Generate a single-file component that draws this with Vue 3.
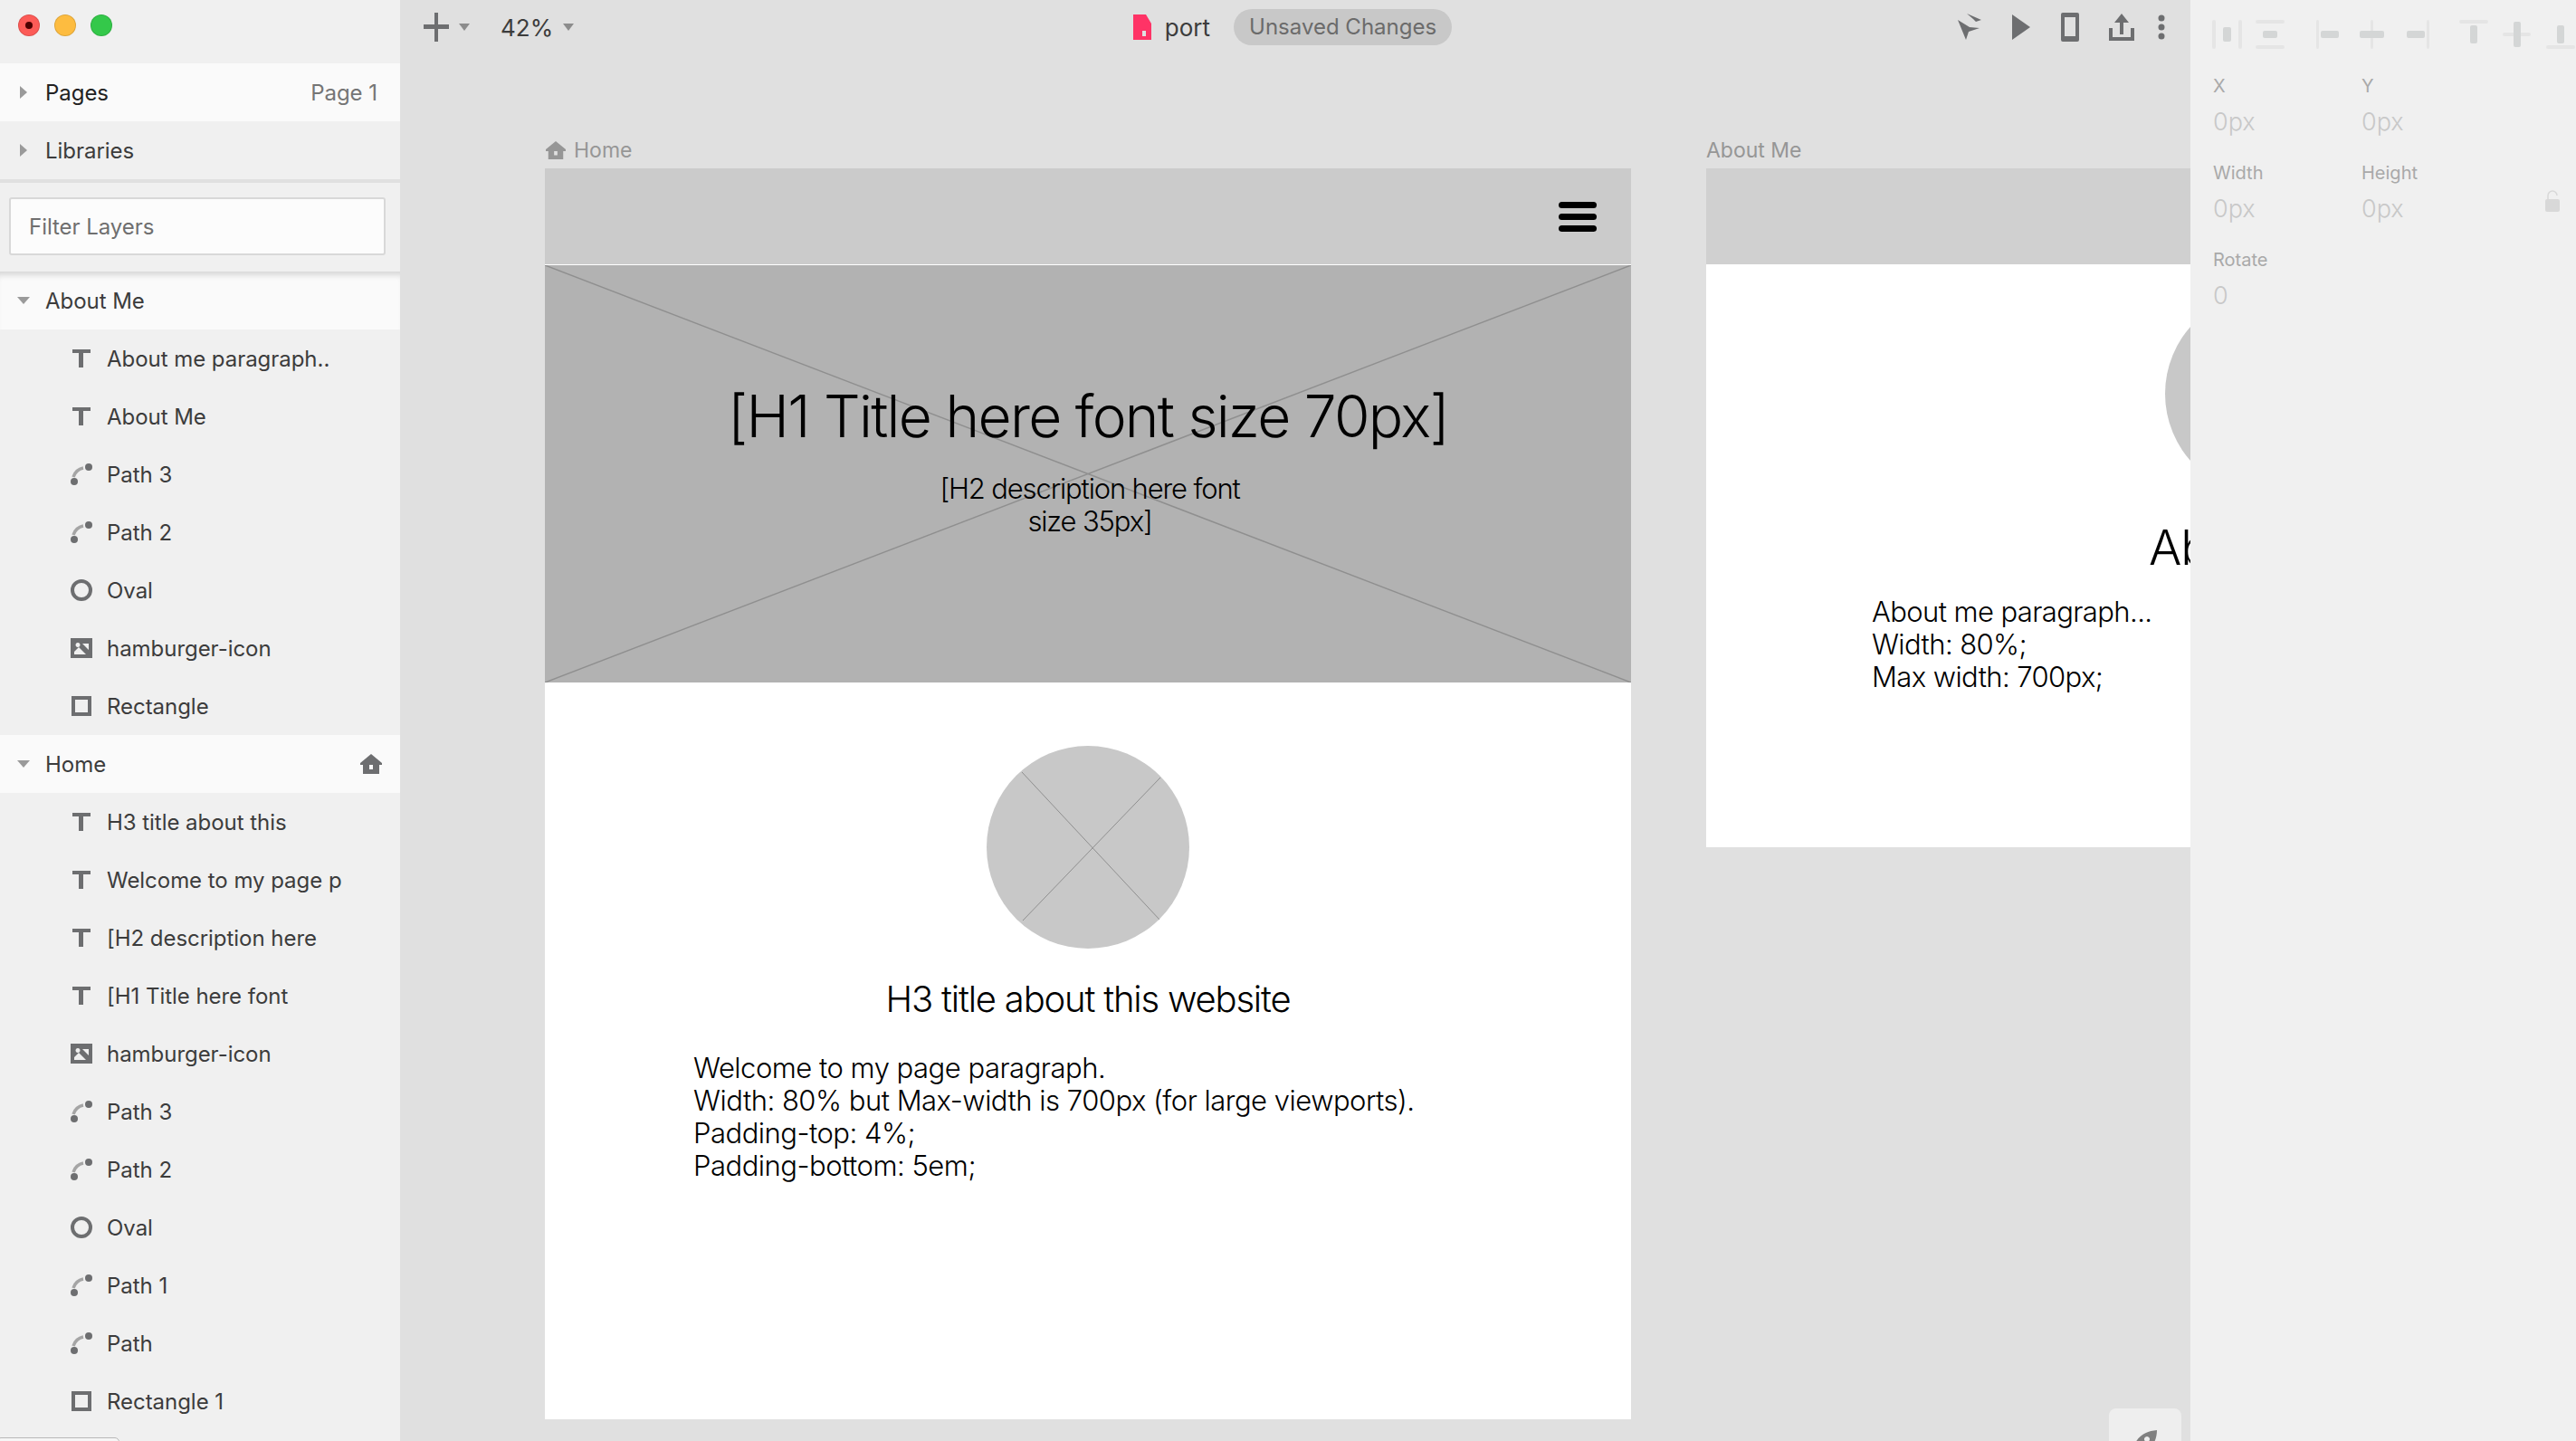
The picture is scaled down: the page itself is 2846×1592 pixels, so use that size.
<template>
  <div class="app">
    <aside class="sidebar">
      <div class="traffic">
        <span class="light red"><i></i></span>
        <span class="light yellow"></span>
        <span class="light green"></span>
      </div>
      <div class="head active">
        <span class="caret-right"></span>
        <span class="strong">Pages</span>
        <span class="page-name">Page 1</span>
      </div>
      <div class="head">
        <span class="caret-right"></span>
        <span>Libraries</span>
      </div>
      <div class="filter">
        <div class="filter-input">Filter Layers</div>
      </div>
      <div class="layers">
        <template v-for="group in groups" :key="group.name">
          <div class="head active">
            <span class="caret-down"></span>
            <span>{{ group.name }}</span>
            <svg v-if="group.home" class="home-icon" viewBox="0 0 24 24" width="24" height="24">
              <path fill="#6d6e70" d="M12 1 24 11v2h-3v10H3V13H0v-2z M10 13v5h4v-5z" fill-rule="evenodd" />
            </svg>
          </div>
          <div v-for="(layer, i) in group.layers" :key="i" class="layer">
            <svg class="layer-icon" viewBox="0 0 24 24" width="24" height="24">
              <path v-if="layer.type === 't'" fill="#6d6e70" d="M2 2h20v4h-8v16H9V6H2z" />
              <path v-else-if="layer.type === 'img'" fill="#6d6e70" fill-rule="evenodd" d="M0 1h24v22H0z M4 5v14h13L9 11l-5 5z M8 6a2.500 2.500 0 1 0 .01 0z M13 7l7 7V7z" />
              <circle v-else-if="layer.type === 'oval'" cx="12" cy="12" r="10" fill="none" stroke="#6d6e70" stroke-width="4" />
              <rect v-else-if="layer.type === 'rect'" x="3" y="3" width="18" height="18" fill="none" stroke="#6d6e70" stroke-width="4" />
              <g v-else>
                <path d="M3 15C5 9 9 6 14 5" fill="none" stroke="#a5a5a5" stroke-width="3.500" />
                <circle cx="20" cy="4" r="4" fill="#6d6e70" />
                <circle cx="4" cy="20" r="4" fill="#6d6e70" />
              </g>
            </svg>
            <span>{{ layer.name }}</span>
          </div>
        </template>
      </div>
      <div class="scroll-tab"></div>
    </aside>

    <main class="main">
      <header class="toolbar">
        <div class="tools-left">
          <svg viewBox="0 0 28 32" width="28" height="32">
            <path fill="#6d6e70" d="M12 0h4v13h12v5H16v14h-4V18H0v-5h12z" />
          </svg>
          <span class="mini-caret"></span>
          <span class="zoom-value">42%</span>
          <span class="mini-caret"></span>
        </div>
        <div class="title">
          <svg viewBox="0 0 20 28" width="20" height="28">
            <path fill="#ff3366" fill-rule="evenodd" d="M0 0h14l6 10v18H0z M10 18v6h4v-6z" />
          </svg>
          <span class="file-name">port</span>
          <span class="pill">Unsaved Changes</span>
        </div>
        <div class="tools-right">
          <svg viewBox="0 0 28 32" width="28" height="32">
            <path fill="#6d6e70" d="M2 8 15 16 26 17 14 21 11 30z M12 1 28 8 22 10 19 7z" />
          </svg>
          <svg viewBox="0 0 22 28" width="22" height="28">
            <path fill="#6d6e70" d="M1 0 21 14 1 28z" />
          </svg>
          <svg viewBox="0 0 20 32" width="20" height="32">
            <path fill="#6d6e70" fill-rule="evenodd" d="M2 0h16a2 2 0 0 1 2 2v28a2 2 0 0 1-2 2H2a2 2 0 0 1-2-2V2a2 2 0 0 1 2-2z M4 5v21h12V5z" />
          </svg>
          <svg viewBox="0 0 28 30" width="28" height="30">
            <path fill="#6d6e70" d="M14 0 22 10h-6v13h-4V10H6z M0 16h4v10h20V16h4v14H0z" />
          </svg>
          <svg class="dots" viewBox="0 0 8 28" width="8" height="28">
            <circle cx="4" cy="4" r="3.500" fill="#6d6e70" />
            <circle cx="4" cy="14" r="3.500" fill="#6d6e70" />
            <circle cx="4" cy="24" r="3.500" fill="#6d6e70" />
          </svg>
        </div>
      </header>

      <div class="canvas">
        <section class="board">
          <div class="board-label">
            <svg viewBox="0 0 24 24" width="24" height="22">
              <path fill="#969696" fill-rule="evenodd" d="M12 1 24 11v2h-3v10H3V13H0v-2z M10 13v5h4v-5z" />
            </svg>
            Home
          </div>
          <div class="artboard home-board">
            <div class="nav">
              <div class="burger"><span></span><span></span><span></span></div>
            </div>
            <div class="hero">
              <svg class="cross" viewBox="0 0 1200 461" preserveAspectRatio="none">
                <path d="M0 0 1200 461M1200 0 0 461" stroke="#8f8f8f" stroke-width="1.500" fill="none" />
              </svg>
              <h1>[H1 Title here font size 70px]</h1>
              <h2>[H2 description here font<br>size 35px]</h2>
            </div>
            <div class="content">
              <div class="oval">
                <svg viewBox="0 0 224 224" width="224" height="224">
                  <path d="M39 29 192 193M192 35 40 193" stroke="#8f8f8f" stroke-width="1" fill="none" />
                </svg>
              </div>
              <h3>H3 title about this website</h3>
              <p class="para">Welcome to my page paragraph.<br>Width: 80% but Max-width is 700px (for large viewports).<br>Padding-top: 4%;<br>Padding-bottom: 5em;</p>
            </div>
          </div>
        </section>

        <section class="board">
          <div class="board-label">About Me</div>
          <div class="artboard about-board">
            <div class="nav"></div>
            <div class="about-content">
              <div class="oval about-oval"></div>
              <h3 class="about-title">About Me</h3>
              <p class="para about-para">About me paragraph...<br>Width: 80%;<br>Max width: 700px;</p>
            </div>
          </div>
        </section>

        <div class="rocket-tab">
          <svg viewBox="0 0 30 30" width="30" height="30">
            <path fill="#808080" fill-rule="evenodd" d="M28 0C28 10 24 18 16 24L4 14C10 4 18 1 28 0z M17 7a3 3 0 1 0 .01 0z" />
          </svg>
        </div>
      </div>
    </main>

    <aside class="panel">
      <svg class="align-icons" viewBox="2444 18 402 40" width="402" height="40">
        <rect v-for="(r, i) in alignRects" :key="i" :x="r[0]" :y="r[1]" :width="r[2]" :height="r[3]" rx="2" :fill="r[4] ? '#d4d6d6' : '#e5e5e5'" />
      </svg>
      <div class="fields">
        <div v-for="f in fields" :key="f.label" class="field">
          <label>{{ f.label }}</label>
          <div class="value">{{ f.value }}</div>
        </div>
        <svg class="lock" viewBox="0 0 16 24" width="16" height="24">
          <path fill="#d8d8d8" d="M2 10h12a2 2 0 0 1 2 2v10a2 2 0 0 1-2 2H2a2 2 0 0 1-2-2V12a2 2 0 0 1 2-2z" />
          <path d="M3 10V6a5 5 0 0 1 10 0" fill="none" stroke="#d8d8d8" stroke-width="1.500" />
        </svg>
      </div>
    </aside>
  </div>
</template>

<script setup>
const aboutLayers = [
  { type: 't', name: 'About me paragraph..' },
  { type: 't', name: 'About Me' },
  { type: 'path', name: 'Path 3' },
  { type: 'path', name: 'Path 2' },
  { type: 'oval', name: 'Oval' },
  { type: 'img', name: 'hamburger-icon' },
  { type: 'rect', name: 'Rectangle' }
];

const homeLayers = [
  { type: 't', name: 'H3 title about this' },
  { type: 't', name: 'Welcome to my page p' },
  { type: 't', name: '[H2 description here' },
  { type: 't', name: '[H1 Title here font' },
  { type: 'img', name: 'hamburger-icon' },
  { type: 'path', name: 'Path 3' },
  { type: 'path', name: 'Path 2' },
  { type: 'oval', name: 'Oval' },
  { type: 'path', name: 'Path 1' },
  { type: 'path', name: 'Path' },
  { type: 'rect', name: 'Rectangle 1' }
];

const groups = [
  { name: 'About Me', layers: aboutLayers },
  { name: 'Home', home: true, layers: homeLayers }
];

const fields = [
  { label: 'X', value: '0px' },
  { label: 'Y', value: '0px' },
  { label: 'Width', value: '0px' },
  { label: 'Height', value: '0px' },
  { label: 'Rotate', value: '0' }
];

// x, y, w, h, darker block
const alignRects = [
  [2444, 22, 4, 32], [2473, 22, 4, 32], [2456, 30, 9, 16, 1],
  [2492, 22, 32, 4], [2492, 50, 32, 4], [2500, 34, 16, 8, 1],
  [2559, 22, 3, 32], [2564, 34, 20, 8, 1],
  [2619, 22, 3, 32], [2607, 34, 27, 8, 1],
  [2681, 22, 3, 32], [2659, 34, 20, 8, 1],
  [2717, 22, 32, 4], [2729, 28, 8, 20, 1],
  [2765, 36, 31, 4], [2777, 24, 8, 28, 1],
  [2813, 50, 32, 4], [2825, 28, 8, 20, 1]
];
</script>

<style>
body {
  margin: 0;
  overflow: hidden;
}
</style>

<style scoped>
.app {
  display: flex;
  width: 2846px;
  height: 1592px;
  overflow: hidden;
  background: #e0e0e0;
  font-family: Inter, "Liberation Sans", sans-serif;
  color: #3c3c3c;
}

.sidebar {
  position: relative;
  flex: 0 0 442px;
  height: 1592px;
  overflow: hidden;
  background: #f0f0f0;
  font-size: 24px;
  letter-spacing: -0.04px;
}

.traffic {
  display: flex;
  gap: 16px;
  height: 70px;
  padding: 16px 0 0 20px;
  box-sizing: border-box;
}

.light {
  display: flex;
  align-items: center;
  justify-content: center;
  width: 24px;
  height: 24px;
  box-sizing: border-box;
  border-radius: 50%;
  border: 1px solid rgba(0, 0, 0, 0.12);
}

.light i {
  width: 8px;
  height: 8px;
  border-radius: 50%;
  background: #4d0000;
}

.red { background: #fc5b57; }
.yellow { background: #fdbc40; }
.green { background: #34c84a; }

.head {
  position: relative;
  display: flex;
  align-items: center;
  height: 64px;
  padding-left: 50px;
}

.head.active {
  background: #fafafa;
}

.caret-right {
  position: absolute;
  left: 22px;
  top: 25px;
  border-left: 8px solid #9a9a9a;
  border-top: 7px solid transparent;
  border-bottom: 7px solid transparent;
}

.caret-down {
  position: absolute;
  left: 19px;
  top: 28px;
  border-top: 8px solid #9a9a9a;
  border-left: 7px solid transparent;
  border-right: 7px solid transparent;
}

.strong {
  color: #222;
}

.page-name {
  margin-left: auto;
  margin-right: 25px;
  color: #757575;
}

.filter {
  height: 102px;
  padding: 16px 16px 0 10px;
  box-sizing: border-box;
  border-top: 4px solid #e0e0e0;
}

.filter-input {
  display: flex;
  align-items: center;
  height: 64px;
  padding-left: 20px;
  box-sizing: border-box;
  border: 2px solid #d8d8d8;
  border-radius: 3px;
  background: #fcfcfc;
  color: #6f6f6f;
}

.layers > .head:first-child {
  box-shadow: inset 0 8px 6px -4px rgba(0, 0, 0, 0.14);
}

.home-icon {
  margin-left: auto;
  margin-right: 20px;
}

.layer {
  display: flex;
  align-items: center;
  height: 64px;
  padding-left: 78px;
}

.layer-icon {
  margin-right: 16px;
  flex: none;
}

.scroll-tab {
  position: absolute;
  left: -4px;
  bottom: -6px;
  width: 134px;
  height: 8px;
  border: 1px solid #b8b8b8;
  border-radius: 6px;
  background: #f6f6f6;
}

.main {
  flex: 0 0 1978px;
  min-width: 0;
  height: 1592px;
}

.toolbar {
  display: grid;
  grid-template-columns: 1fr auto 1fr;
  align-items: center;
  height: 60px;
  padding: 0 28px 0 26px;
}

.tools-left {
  display: flex;
  align-items: center;
}

.mini-caret {
  margin-left: 11px;
  border-top: 8px solid #8c8c8c;
  border-left: 6px solid transparent;
  border-right: 6px solid transparent;
}

.zoom-value {
  margin-left: 34px;
  font-size: 26px;
  color: #3c3c3c;
}

.title {
  display: flex;
  align-items: center;
  margin-right: 4px;
}

.file-name {
  margin-left: 15px;
  font-size: 26px;
  color: #3c3c3c;
}

.pill {
  margin-left: 26px;
  padding: 0 17px;
  height: 40px;
  line-height: 40px;
  border-radius: 20px;
  background: #c8c8c8;
  font-size: 24px;
  color: #6b6b6b;
}

.tools-right {
  display: flex;
  align-items: center;
  justify-content: flex-end;
  gap: 33px;
}

.tools-right .dots {
  margin-left: -7px;
}

.canvas {
  position: relative;
  display: flex;
  gap: 83px;
  height: 1532px;
  padding: 92px 0 0 160px;
  box-sizing: border-box;
  overflow: hidden;
}

.board {
  flex: 0 0 1200px;
}

.board-label {
  display: flex;
  align-items: center;
  gap: 8px;
  height: 34px;
  padding-bottom: 6px;
  box-sizing: border-box;
  font-size: 23px;
  color: #969696;
}

.artboard {
  width: 1200px;
  background: #fff;
}

.home-board {
  height: 1382px;
}

.about-board {
  height: 750px;
}

.nav {
  display: flex;
  align-items: center;
  justify-content: flex-end;
  height: 106px;
  padding-right: 38px;
  background: #cbcbcb;
}

.about-board .nav {
  background: #d0d0d0;
}

.burger {
  display: flex;
  flex-direction: column;
  gap: 6px;
  width: 42px;
}

.burger span {
  height: 7px;
  border-radius: 4px;
  background: #000;
}

.hero {
  position: relative;
  height: 461px;
  margin-top: 1px;
  background: #b2b2b2;
  text-align: center;
  color: #000;
  overflow: hidden;
}

.cross {
  position: absolute;
  left: 0;
  top: 0;
  width: 100%;
  height: 100%;
}

h1,
h2,
h3,
p {
  position: relative;
  margin: 0;
  font-weight: 300;
  color: #000;
}

h1 {
  padding-top: 126px;
  font-size: 64px;
  line-height: 82px;
  letter-spacing: -1.7px;
}

h2 {
  margin-top: 21px;
  padding-left: 4px;
  font-size: 31px;
  line-height: 36px;
  letter-spacing: -1.15px;
}

.content {
  display: flex;
  flex-direction: column;
  align-items: center;
  padding-top: 70px;
}

.oval {
  width: 224px;
  height: 224px;
  border-radius: 50%;
  background: #c8c8c8;
  overflow: hidden;
}

h3 {
  margin-top: 28px;
  font-size: 40px;
  line-height: 56px;
  letter-spacing: -1.2px;
  text-align: center;
}

.para {
  align-self: flex-start;
  margin: 30px 0 0 164px;
  font-size: 31px;
  line-height: 36px;
  letter-spacing: -0.5px;
}

.about-content {
  position: relative;
  height: 644px;
}

.about-oval {
  margin: 31px 0 0 507px;
}

.about-title {
  position: absolute;
  left: 489px;
  top: 252px;
  margin: 0;
  font-size: 54px;
  line-height: 60px;
  letter-spacing: -1px;
  white-space: nowrap;
}

.about-para {
  position: absolute;
  left: 183px;
  top: 335px;
  margin: 0;
  letter-spacing: -0.6px;
}

.rocket-tab {
  position: absolute;
  left: 1888px;
  top: 1496px;
  display: flex;
  justify-content: center;
  width: 80px;
  height: 60px;
  padding-top: 24px;
  box-sizing: border-box;
  border-radius: 8px 8px 0 0;
  background: #eeeeee;
}

.panel {
  position: relative;
  flex: 0 0 426px;
  height: 1592px;
  padding: 18px 0 0 25px;
  box-sizing: border-box;
  background: #f0f0f0;
}

.align-icons {
  display: block;
  margin-left: -1px;
}

.fields {
  position: relative;
  display: grid;
  grid-template-columns: 164px 164px;
  row-gap: 16px;
  margin-top: 22px;
}

.field label {
  display: block;
  height: 30px;
  line-height: 30px;
  font-size: 20px;
  color: #a9a9a9;
}

.field .value {
  height: 50px;
  line-height: 50px;
  font-size: 27px;
  font-weight: 300;
  color: #c8c8c8;
}

.lock {
  position: absolute;
  left: 367px;
  top: 130px;
}
</style>
